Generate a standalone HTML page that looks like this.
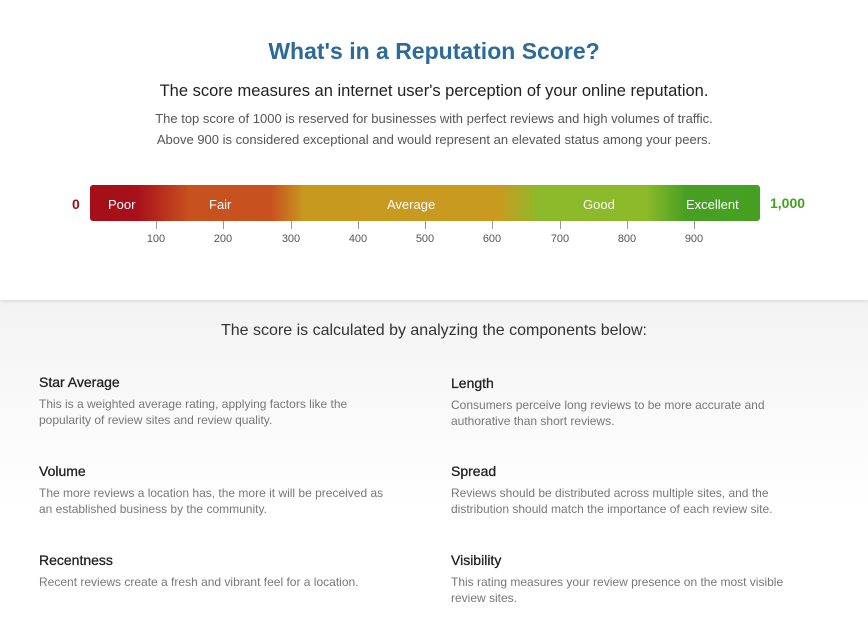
<!DOCTYPE html>
<html><head><style>
*{margin:0;padding:0;box-sizing:border-box}
body{width:868px;height:641px;font-family:"Liberation Sans",sans-serif;background:#fff;position:relative;overflow:hidden}
.top{position:absolute;left:0;top:0;width:868px;height:300px;background:#fff;box-shadow:0 1px 4px rgba(0,0,0,.12);z-index:2}
h1{position:absolute;top:38px;width:100%;text-align:center;color:#2b6a99;font-size:23px;font-weight:bold}
.sub{position:absolute;top:82px;width:100%;text-align:center;font-size:16.5px;color:#222}
.p{position:absolute;top:108px;width:100%;text-align:center;font-size:13px;color:#555;line-height:21px}
.bar{position:absolute;left:90px;top:185px;width:670px;height:36px;border-radius:3px;
background:linear-gradient(to right,#a30f18 0%,#a8101a 7%,#c8521f 15%,#c8521f 27%,#c8991f 32%,#c99a20 61%,#8cba2a 67%,#8cba2a 83%,#479f23 89%,#45a022 100%)}
.bl{position:absolute;top:197px;color:#fff;font-size:13px}
.tick{position:absolute;top:221px;width:1px;height:8px;background:#999}
.tl{position:absolute;top:233px;font-size:11px;color:#555;width:40px;margin-left:-20px;text-align:center}
.bottom{position:absolute;top:300px;left:0;width:868px;height:341px;background:linear-gradient(#f3f3f3,#fff 60%)}
.calc{position:absolute;top:322px;width:100%;text-align:center;font-size:16px;color:#333}
.it{position:absolute;width:355px}
.it b{display:block;font-size:14px;color:#222;margin-bottom:6px;font-weight:normal;-webkit-text-stroke:0.3px #222}
.it span{font-size:12px;color:#777;line-height:16px;display:block}
</style></head><body>
<div class="top">
<h1>What's in a Reputation Score?</h1>
<div class="sub">The score measures an internet user's perception of your online reputation.</div>
<div class="p">The top score of 1000 is reserved for businesses with perfect reviews and high volumes of traffic.<br>Above 900 is considered exceptional and would represent an elevated status among your peers.</div>
<div style="position:absolute;left:72px;top:196px;color:#a30f18;font-weight:bold;font-size:14px">0</div>
<div class="bar"></div>
<div class="bl" style="left:108px">Poor</div>
<div class="bl" style="left:209px">Fair</div>
<div class="bl" style="left:387px">Average</div>
<div class="bl" style="left:583px">Good</div>
<div class="bl" style="left:686px">Excellent</div>
<div style="position:absolute;left:770px;top:195px;color:#45a022;font-weight:bold;font-size:14px">1,000</div>
<div class="tick" style="left:156px"></div><div class="tl" style="left:156px">100</div>
<div class="tick" style="left:223px"></div><div class="tl" style="left:223px">200</div>
<div class="tick" style="left:291px"></div><div class="tl" style="left:291px">300</div>
<div class="tick" style="left:358px"></div><div class="tl" style="left:358px">400</div>
<div class="tick" style="left:425px"></div><div class="tl" style="left:425px">500</div>
<div class="tick" style="left:492px"></div><div class="tl" style="left:492px">600</div>
<div class="tick" style="left:560px"></div><div class="tl" style="left:560px">700</div>
<div class="tick" style="left:627px"></div><div class="tl" style="left:627px">800</div>
<div class="tick" style="left:694px"></div><div class="tl" style="left:694px">900</div>
</div>
<div class="bottom"></div>
<div class="calc">The score is calculated by analyzing the components below:</div>
<div class="it" style="left:39px;top:374px"><b>Star Average</b><span>This is a weighted average rating, applying factors like the popularity of review sites and review quality.</span></div>
<div class="it" style="left:451px;top:375px"><b>Length</b><span>Consumers perceive long reviews to be more accurate and authorative than short reviews.</span></div>
<div class="it" style="left:39px;top:463px"><b>Volume</b><span>The more reviews a location has, the more it will be preceived as an established business by the community.</span></div>
<div class="it" style="left:451px;top:463px"><b>Spread</b><span>Reviews should be distributed across multiple sites, and the distribution should match the importance of each review site.</span></div>
<div class="it" style="left:39px;top:552px"><b>Recentness</b><span>Recent reviews create a fresh and vibrant feel for a location.</span></div>
<div class="it" style="left:451px;top:552px"><b>Visibility</b><span>This rating measures your review presence on the most visible review sites.</span></div>
</body></html>
